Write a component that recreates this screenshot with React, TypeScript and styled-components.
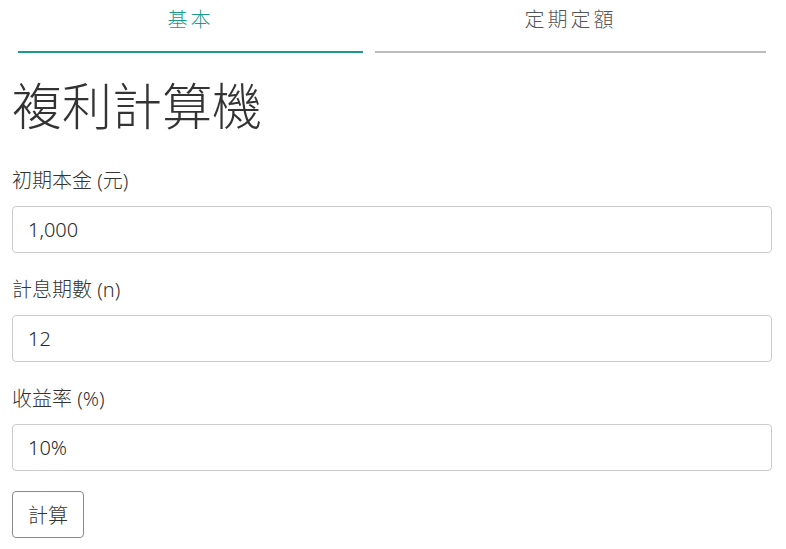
import React from "react";
import styled, { createGlobalStyle } from "styled-components";

const Global = createGlobalStyle`
  html, body { margin: 0; padding: 0; background: #fff; }
  body {
    font-family: "Noto Sans", "Noto Sans CJK TC", sans-serif;
    color: #333;
  }
  * { box-sizing: border-box; }
`;

const Page = styled.div`
  padding: 0 14px 0 12px;
`;

const Tabs = styled.div`
  display: flex;
  gap: 12px;
  margin: 0 6px;
`;

const Tab = styled.div<{ $active?: boolean }>`
  flex: 1 1 auto;
  text-align: center;
  font-size: 20px;
  font-weight: 300;
  line-height: 30px;
  letter-spacing: 3px;
  padding: 5px 0 16px;
  color: ${(p) => (p.$active ? "#1a9a8a" : "#555")};
  border-bottom: 2px solid ${(p) => (p.$active ? "#1a9a8a" : "#bdbdbd")};
  cursor: pointer;
`;

const Title = styled.h1`
  font-size: 50px;
  font-weight: 300;
  line-height: 58px;
  margin: 24px 0 31px;
  color: #333;
`;

const Field = styled.div`
  margin-bottom: 22px;
`;

const Label = styled.label`
  display: block;
  font-size: 20px;
  font-weight: 300;
  line-height: 30px;
  margin-bottom: 10px;
  color: #333;
`;

const Input = styled.input`
  display: block;
  width: 100%;
  height: 47px;
  border: 1px solid #ccc;
  border-radius: 4px;
  padding: 0 15px;
  font-family: inherit;
  font-size: 20px;
  font-weight: 300;
  color: #2a2a2a;
  outline: none;
`;

const Button = styled.button`
  height: 47px;
  padding: 0 15px;
  border: 1px solid #8a8a8a;
  border-radius: 4px;
  background: #fff;
  font-family: inherit;
  font-size: 20px;
  font-weight: 300;
  color: #333;
  margin-top: -2px;
`;

export default function App() {
  return (
    <>
      <Global />
      <Page>
        <Tabs>
          <Tab $active>基本</Tab>
          <Tab>定期定額</Tab>
        </Tabs>
        <Title>複利計算機</Title>
        <Field>
          <Label>初期本金 (元)</Label>
          <Input defaultValue="1,000" />
        </Field>
        <Field>
          <Label>計息期數 (n)</Label>
          <Input defaultValue="12" />
        </Field>
        <Field>
          <Label>收益率 (%)</Label>
          <Input defaultValue="10%" />
        </Field>
        <Button>計算</Button>
      </Page>
    </>
  );
}
